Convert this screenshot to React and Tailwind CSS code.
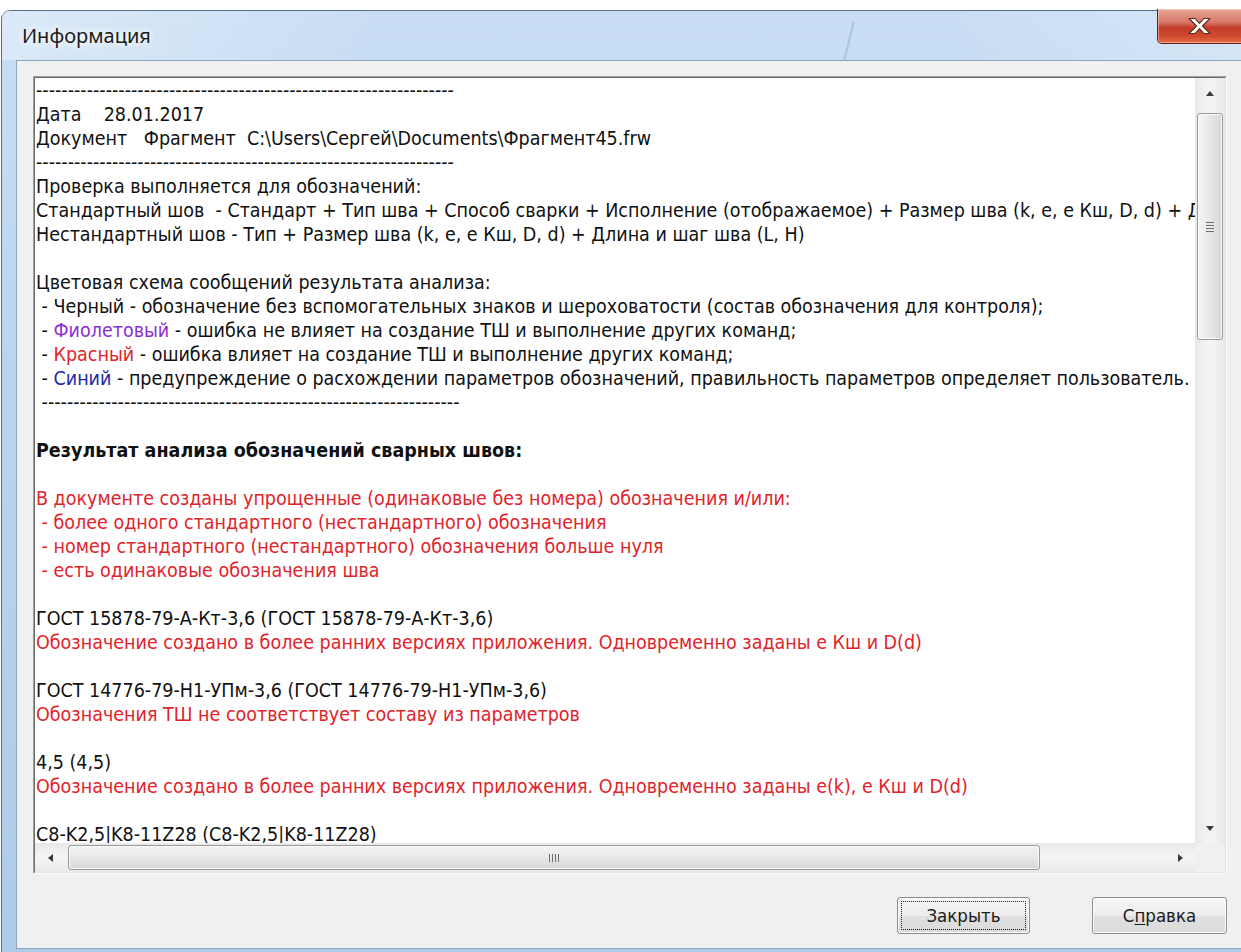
const DASH = '-'.repeat(66);
const RED = 'text-[#e0242b]';
const VIOLET = 'text-[#8a2fd0]';
const BLUE = 'text-[#2228a8]';

// each line is a list of [text, className] segments
const LINES = [
  [[DASH]],
  [['Дата    28.01.2017']],
  [['Документ   Фрагмент  C:\\Users\\Сергей\\Documents\\Фрагмент45.frw']],
  [[DASH]],
  [['Проверка выполняется для обозначений:']],
  [['Стандартный шов  - Стандарт + Тип шва + Способ сварки + Исполнение (отображаемое) + Размер шва (k, e, e Кш, D, d) + Длина и шаг шва (L, H)']],
  [['Нестандартный шов - Тип + Размер шва (k, e, e Кш, D, d) + Длина и шаг шва (L, H)']],
  [],
  [['Цветовая схема сообщений результата анализа:']],
  [[' - Черный - обозначение без вспомогательных знаков и шероховатости (состав обозначения для контроля);']],
  [[' - '], ['Фиолетовый', VIOLET], [' - ошибка не влияет на создание ТШ и выполнение других команд;']],
  [[' - '], ['Красный', RED], [' - ошибка влияет на создание ТШ и выполнение других команд;']],
  [[' - '], ['Синий', BLUE], [' - предупреждение о расхождении параметров обозначений, правильность параметров определяет пользователь.']],
  [[' ' + DASH]],
  [],
  [['Результат анализа обозначений сварных швов:', 'font-bold']],
  [],
  [['В документе созданы упрощенные (одинаковые без номера) обозначения и/или:', RED]],
  [[' - более одного стандартного (нестандартного) обозначения', RED]],
  [[' - номер стандартного (нестандартного) обозначения больше нуля', RED]],
  [[' - есть одинаковые обозначения шва', RED]],
  [],
  [['ГОСТ 15878-79-А-Кт-3,6 (ГОСТ 15878-79-А-Кт-3,6)']],
  [['Обозначение создано в более ранних версиях приложения. Одновременно заданы е Кш и D(d)', RED]],
  [],
  [['ГОСТ 14776-79-Н1-УПм-3,6 (ГОСТ 14776-79-Н1-УПм-3,6)']],
  [['Обозначения ТШ не соответствует составу из параметров', RED]],
  [],
  [['4,5 (4,5)']],
  [['Обозначение создано в более ранних версиях приложения. Одновременно заданы е(k), е Кш и D(d)', RED]],
  [],
  [['C8-K2,5|K8-11Z28 (C8-K2,5|K8-11Z28)']],
];

const ARROWS = {
  up: '0,5 4,0 8,5',
  down: '0,0 8,0 4,5',
  left: '5,0 5,8 0,4',
  right: '0,0 0,8 5,4',
};

function Arrow({ dir }) {
  const wide = dir === 'up' || dir === 'down';
  return (
    <svg width={wide ? 8 : 5} height={wide ? 5 : 8} viewBox={wide ? '0 0 8 5' : '0 0 5 8'}>
      <polygon points={ARROWS[dir]} fill="#3a3a3a" />
    </svg>
  );
}

function CloseGlyph() {
  return (
    <svg width="27" height="18" viewBox="0 0 27 18">
      <path
        d="M3 1.5h6L13.5 6.4 18 1.5h6l-7.5 7.5 7.5 7.5h-6L13.5 11.6 9 16.5H3l7.5-7.5z"
        fill="#fff"
        stroke="#5b2a24"
        strokeWidth="1.1"
        strokeLinejoin="round"
      />
    </svg>
  );
}

function VScrollbar() {
  return (
    <div className="flex w-[30px] flex-col bg-[linear-gradient(90deg,#e8e8e8,#f3f3f3_40%,#f3f3f3_60%,#e8e8e8)]">
      <div className="flex h-[30px] items-center justify-center">
        <Arrow dir="up" />
      </div>
      <div className="flex-1 px-[2px] pt-[5px]">
        <div className="flex h-[227px] items-center justify-center rounded-[3px] border border-[#9a9a9a] bg-[linear-gradient(90deg,#f4f4f4,#e8e8e8_50%,#d6d6d6)] shadow-[inset_0_0_0_1px_#fafafa]">
          <div className="flex flex-col gap-[2px]">
            <div className="h-px w-[8px] bg-[#6e6e6e]" />
            <div className="h-px w-[8px] bg-[#6e6e6e]" />
            <div className="h-px w-[8px] bg-[#6e6e6e]" />
            <div className="h-px w-[8px] bg-[#6e6e6e]" />
          </div>
        </div>
      </div>
      <div className="flex h-[30px] items-center justify-center">
        <Arrow dir="down" />
      </div>
    </div>
  );
}

function HScrollbar() {
  return (
    <div className="flex h-[29px] bg-[linear-gradient(180deg,#e8e8e8,#f3f3f3_40%,#f3f3f3_60%,#e8e8e8)]">
      <div className="flex w-[30px] items-center justify-center">
        <Arrow dir="left" />
      </div>
      <div className="flex flex-1 py-[2px] pl-[3px]">
        <div className="flex w-[972px] items-center justify-center rounded-[3px] border border-[#9a9a9a] bg-[linear-gradient(180deg,#f4f4f4,#e8e8e8_50%,#d6d6d6)] shadow-[inset_0_0_0_1px_#fafafa]">
          <div className="flex h-[8px] gap-[2px]">
            <div className="w-px bg-[#6e6e6e]" />
            <div className="w-px bg-[#6e6e6e]" />
            <div className="w-px bg-[#6e6e6e]" />
            <div className="w-px bg-[#6e6e6e]" />
          </div>
        </div>
      </div>
      <div className="flex w-[30px] items-center justify-center">
        <Arrow dir="right" />
      </div>
    </div>
  );
}

function ReportBox() {
  return (
    <div className="h-[798px] w-[1194px] border-t border-l border-t-[#a0a0a0] border-l-[#a0a0a0] border-r border-b border-r-[#fdfdfd] border-b-[#fdfdfd]">
      <div className="flex h-full flex-col border-t border-l border-t-[#6a6a6a] border-l-[#6a6a6a] border-r border-b border-r-[#e2e2e2] border-b-[#e2e2e2] bg-white">
        <div className="flex min-h-0 flex-1">
          <div className="min-w-0 flex-1 overflow-hidden pt-[1px] pl-[1px] font-['DejaVu_Sans_Condensed','DejaVu_Sans',sans-serif] text-[19.5px] leading-[24px] text-[#111]">
            {LINES.map((segs, i) => (
              <div key={i} className="h-[24px] whitespace-pre">
                {segs.map(([t, cls], j) => (
                  <span key={j} className={cls}>{t}</span>
                ))}
              </div>
            ))}
          </div>
          <VScrollbar />
        </div>
        <div className="flex">
          <div className="flex-1">
            <HScrollbar />
          </div>
          <div className="w-[30px] bg-[#f0f0f0]" />
        </div>
      </div>
    </div>
  );
}

function DialogButton({ children, focused }) {
  return (
    <button className="h-[37px] w-full rounded-[3px] border border-[#8e8e8e] bg-[linear-gradient(180deg,#f6f6f6,#ececec_50%,#e0e0e0_51%,#dadada)] p-[3px] shadow-[inset_0_0_0_1px_#fcfcfc] font-['DejaVu_Sans_Condensed','DejaVu_Sans',sans-serif] text-[18.5px] text-[#1a1a1a]">
      <div className={`flex h-full items-center justify-center ${focused ? 'border border-dotted border-[#222]' : 'border border-transparent'}`}>
        {children}
      </div>
    </button>
  );
}

export default function App() {
  return (
    <div className="relative h-[952px] w-[1241px] overflow-hidden bg-white pt-[10px]">
      <div className="ml-[1px] flex h-[942px] w-[1260px] flex-col rounded-tl-[9px] border-t border-l border-[#56708c] bg-[linear-gradient(180deg,#c9def4,#b9d4ef_40%,#aecbe9)]">
        {/* caption */}
        <div className="relative flex h-[49px] items-center bg-[linear-gradient(90deg,rgba(255,255,255,0.35),rgba(255,255,255,0)_30%,rgba(255,255,255,0)_75%,rgba(255,255,255,0.25))] pl-[20px]">
          <span className="font-['Noto_Sans','Open_Sans',sans-serif] text-[20px] text-[#1b1b1b] [text-shadow:0_0_10px_#fff,0_0_6px_#fff]">
            Информация
          </span>
          <div className="absolute top-[10px] left-[846px] h-[40px] w-[2px] rotate-[14deg] bg-[#9fb6ce] opacity-70" />
        </div>

        {/* client area */}
        <div className="ml-[14px] flex h-[889px] flex-col border border-[#8ea5bd] bg-[#f0f0f0] pt-[15px] pl-[16px]">
          <ReportBox />
          <div className="mt-[23px] flex w-[1194px] justify-end gap-[62px]">
            <div className="w-[133px]">
              <DialogButton focused>Закрыть</DialogButton>
            </div>
            <div className="w-[135px]">
              <DialogButton>
                <span>
                  С<span className="underline underline-offset-2">п</span>равка
                </span>
              </DialogButton>
            </div>
          </div>
        </div>
      </div>

      {/* caption close button */}
      <div className="absolute top-[9px] left-[1157px] flex h-[35px] w-[92px] items-center justify-center rounded-b-[5px] border border-t-0 border-[#5e2018] bg-[linear-gradient(180deg,#e9a898,#d77566_40%,#c23c27_55%,#cf4a30_80%,#e8703f)] pr-[8px] shadow-[inset_0_0_0_1px_rgba(255,220,210,0.5)]">
        <CloseGlyph />
      </div>
    </div>
  );
}
